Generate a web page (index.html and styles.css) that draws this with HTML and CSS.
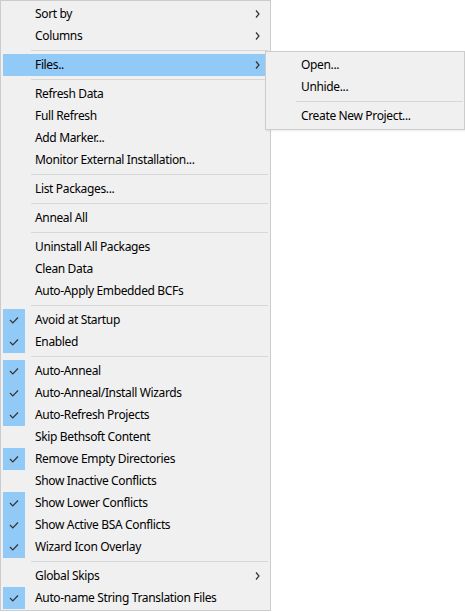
FILE: index.html
```html
<!DOCTYPE html>
<html>
<head>
<meta charset="utf-8">
<link rel="stylesheet" href="styles.css">
</head>
<body>
<div class="menu main">
  <div class="item"><span class="gutter"></span><span class="label">Sort by</span><svg class="arrow" viewBox="0 0 5 8"><path d="M1 0.5 L4 4 L1 7.5" /></svg></div>
  <div class="item"><span class="gutter"></span><span class="label">Columns</span><svg class="arrow" viewBox="0 0 5 8"><path d="M1 0.5 L4 4 L1 7.5" /></svg></div>
  <div class="sep"></div>
  <div class="item active"><span class="gutter"></span><span class="label">Files..</span><svg class="arrow" viewBox="0 0 5 8"><path d="M1 0.5 L4 4 L1 7.5" /></svg></div>
  <div class="sep"></div>
  <div class="item"><span class="gutter"></span><span class="label">Refresh Data</span></div>
  <div class="item"><span class="gutter"></span><span class="label">Full Refresh</span></div>
  <div class="item"><span class="gutter"></span><span class="label">Add Marker...</span></div>
  <div class="item"><span class="gutter"></span><span class="label">Monitor External Installation...</span></div>
  <div class="sep"></div>
  <div class="item"><span class="gutter"></span><span class="label">List Packages...</span></div>
  <div class="sep"></div>
  <div class="item"><span class="gutter"></span><span class="label">Anneal All</span></div>
  <div class="sep"></div>
  <div class="item"><span class="gutter"></span><span class="label">Uninstall All Packages</span></div>
  <div class="item"><span class="gutter"></span><span class="label">Clean Data</span></div>
  <div class="item"><span class="gutter"></span><span class="label">Auto-Apply Embedded BCFs</span></div>
  <div class="sep"></div>
  <div class="item checked"><span class="gutter"><svg class="check" viewBox="0 0 10 8"><path d="M1 4 L3.8 6.8 L9 1.5" /></svg></span><span class="label">Avoid at Startup</span></div>
  <div class="item checked"><span class="gutter"><svg class="check" viewBox="0 0 10 8"><path d="M1 4 L3.8 6.8 L9 1.5" /></svg></span><span class="label">Enabled</span></div>
  <div class="sep"></div>
  <div class="item checked"><span class="gutter"><svg class="check" viewBox="0 0 10 8"><path d="M1 4 L3.8 6.8 L9 1.5" /></svg></span><span class="label">Auto-Anneal</span></div>
  <div class="item checked"><span class="gutter"><svg class="check" viewBox="0 0 10 8"><path d="M1 4 L3.8 6.8 L9 1.5" /></svg></span><span class="label">Auto-Anneal/Install Wizards</span></div>
  <div class="item checked"><span class="gutter"><svg class="check" viewBox="0 0 10 8"><path d="M1 4 L3.8 6.8 L9 1.5" /></svg></span><span class="label">Auto-Refresh Projects</span></div>
  <div class="item"><span class="gutter"></span><span class="label">Skip Bethsoft Content</span></div>
  <div class="item checked"><span class="gutter"><svg class="check" viewBox="0 0 10 8"><path d="M1 4 L3.8 6.8 L9 1.5" /></svg></span><span class="label">Remove Empty Directories</span></div>
  <div class="item"><span class="gutter"></span><span class="label">Show Inactive Conflicts</span></div>
  <div class="item checked"><span class="gutter"><svg class="check" viewBox="0 0 10 8"><path d="M1 4 L3.8 6.8 L9 1.5" /></svg></span><span class="label">Show Lower Conflicts</span></div>
  <div class="item checked"><span class="gutter"><svg class="check" viewBox="0 0 10 8"><path d="M1 4 L3.8 6.8 L9 1.5" /></svg></span><span class="label">Show Active BSA Conflicts</span></div>
  <div class="item checked"><span class="gutter"><svg class="check" viewBox="0 0 10 8"><path d="M1 4 L3.8 6.8 L9 1.5" /></svg></span><span class="label">Wizard Icon Overlay</span></div>
  <div class="sep"></div>
  <div class="item"><span class="gutter"></span><span class="label">Global Skips</span><svg class="arrow" viewBox="0 0 5 8"><path d="M1 0.5 L4 4 L1 7.5" /></svg></div>
  <div class="item checked"><span class="gutter"><svg class="check" viewBox="0 0 10 8"><path d="M1 4 L3.8 6.8 L9 1.5" /></svg></span><span class="label">Auto-name String Translation Files</span></div>
</div>
<div class="menu sub">
  <div class="item"><span class="gutter"></span><span class="label">Open...</span></div>
  <div class="item"><span class="gutter"></span><span class="label">Unhide...</span></div>
  <div class="sep"></div>
  <div class="item"><span class="gutter"></span><span class="label">Create New Project...</span></div>
</div>
</body>
</html>
```
FILE: styles.css
```css
html, body {
  margin: 0;
  padding: 0;
  background: #ffffff;
}
body {
  font-family: "Noto Sans", "Liberation Sans", sans-serif;
  font-size: 12px;
  letter-spacing: -0.35px;
  color: #000;
  position: relative;
  width: 465px;
  height: 612px;
  overflow: hidden;
}
.menu {
  background: #f0f0f0;
  border: 1px solid #cccccc;
  padding: 2px;
  box-sizing: border-box;
}
.main {
  width: 271px;
  height: 611px;
}
.sub {
  position: absolute;
  left: 265px;
  top: 51px;
  width: 200px;
  box-shadow: 1px 1px 2px rgba(0,0,0,0.08);
}
.item {
  display: flex;
  align-items: center;
  height: 22px;
}
.item.active {
  background: #91c9f7;
}
.gutter {
  width: 22px;
  height: 22px;
  flex: none;
  display: flex;
  align-items: center;
  justify-content: center;
}
.checked .gutter {
  background: #91c9f7;
}
.check {
  width: 10px;
  height: 8px;
  fill: none;
  stroke: #333;
  stroke-width: 1.2;
}
.label {
  flex: 1;
  margin-left: 10px;
  line-height: 22px;
  white-space: nowrap;
  padding-bottom: 1px;
}
.sub .label {
  margin-left: 11px;
}
.arrow {
  width: 5px;
  height: 8px;
  margin-right: 8px;
  fill: none;
  stroke: #333;
  stroke-width: 1.2;
}
.sep {
  height: 7px;
  display: flex;
  align-items: center;
  padding-left: 28px;
}
.sep::after {
  content: "";
  display: block;
  flex: 1;
  height: 1px;
  background: #d7d7d7;
}
.sub .sep {
  padding-left: 28px;
  margin-right: -1px;
}
```
